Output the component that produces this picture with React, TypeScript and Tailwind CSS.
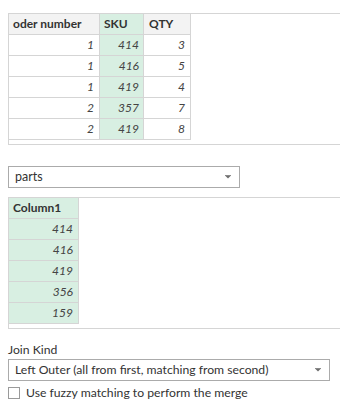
import React from "react";

const rows = [
  [1, 414, 3],
  [1, 416, 5],
  [1, 419, 4],
  [2, 357, 7],
  [2, 419, 8],
];
const col1 = [414, 416, 419, 356, 159];

function Arrow() {
  return (
    <svg width="6" height="4" viewBox="0 0 6 4" className="block">
      <rect x="0" y="0" width="6" height="1" fill="#8a8a8a" />
      <path d="M0.5 1 L5.5 1 L3 3.5 Z" fill="#6e6e6e" />
    </svg>
  );
}

export default function App() {
  const font = { fontFamily: "Lato, 'Open Sans', sans-serif" };
  return (
    <div className="w-[340px] h-[409px] bg-white text-[#252423] pl-2 pt-[13px] flex flex-col" style={font}>
      {/* Table 1 */}
      <div className="border-l border-t border-b border-[#d5d5d5] h-[132px] flex flex-col">
        <div className="flex h-[21px] text-[12px] font-bold text-[#333]">
          <div className="w-[91px] bg-[#f3f3f3] border-r border-b border-[#d5d5d5] pl-1 flex items-center">oder number</div>
          <div className="w-[44px] bg-[#d8efe2] border-r border-b border-[#d5d5d5] pl-1 flex items-center">SKU</div>
          <div className="w-[47px] bg-[#f3f3f3] border-r border-b border-[#d5d5d5] pl-[5px] flex items-center">QTY</div>
        </div>
        {rows.map((r, i) => (
          <div key={i} className="flex h-[21px] text-[12px] italic text-[#444]">
            <div className="w-[91px] border-r border-b border-[#d5d5d5] pr-[5px] flex items-center justify-end">{r[0]}</div>
            <div className="w-[44px] bg-[#d8efe2] border-r border-b border-[#d5d5d5] pr-1 flex items-center justify-end">{r[1]}</div>
            <div className="w-[47px] border-r border-b border-[#d5d5d5] pr-[5px] flex items-center justify-end">{r[2]}</div>
          </div>
        ))}
      </div>

      {/* Dropdown parts */}
      <div className="mt-[21px] w-[232px] h-[22px] border border-[#ababab] flex items-center justify-between pl-[6px] pr-[8px] text-[12.5px] text-[#333]">
        <span>parts</span>
        <Arrow />
      </div>

      {/* Table 2 */}
      <div className="mt-[9px] border-l border-t border-b border-[#d5d5d5] h-[132px] flex flex-col">
        <div className="flex h-[21px] text-[12px] font-bold text-[#333]">
          <div className="w-[70px] bg-[#d8efe2] border-r border-b border-[#d5d5d5] pl-1 flex items-center">Column1</div>
        </div>
        {col1.map((v, i) => (
          <div key={i} className="flex h-[21px] text-[12px] italic text-[#444]">
            <div className="w-[70px] bg-[#d8efe2] border-r border-b border-[#d5d5d5] pr-[5px] flex items-center justify-end">{v}</div>
          </div>
        ))}
      </div>

      {/* Join Kind */}
      <div className="mt-[13px] text-[12.2px] leading-[16px] text-[#333]">Join Kind</div>
      <div className="mt-[1px] w-[322px] h-[22px] border border-[#ababab] flex items-center justify-between pl-[6px] pr-[8px] text-[12.2px] text-[#333]">
        <span>Left Outer (all from first, matching from second)</span>
        <Arrow />
      </div>
      <div className="mt-[4px] flex items-center gap-[6px] text-[12.2px] leading-[16px] text-[#333]">
        <div className="w-[12px] h-[12px] border border-[#9a9a9a] bg-white" />
        <span>Use fuzzy matching to perform the merge</span>
      </div>
    </div>
  );
}
